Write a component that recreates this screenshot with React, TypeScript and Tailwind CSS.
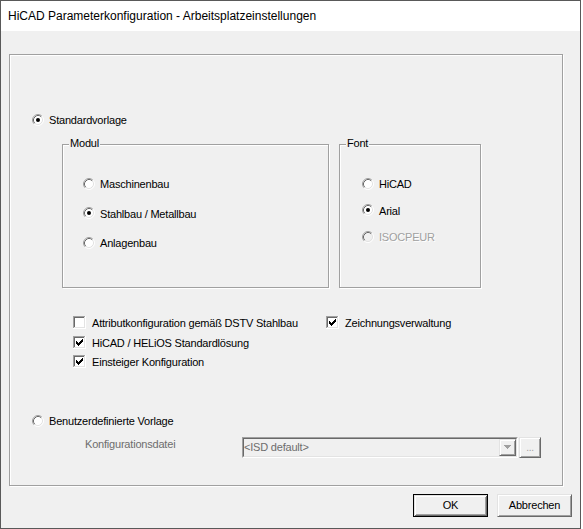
import React from "react";

// classic win32 dialog look
const ui = "font-['Liberation_Sans',Arial,sans-serif] text-[11px] leading-[13px] tracking-[-0.2px] text-black";

function Radio({ checked = false, disabled = false }: { checked?: boolean; disabled?: boolean }) {
  return (
    <svg width="12" height="12" viewBox="0 0 12 12" className="shrink-0">
      <circle cx="6" cy="6" r="5" fill={disabled ? "#f0f0f0" : "#fff"} />
      <path d="M2.11 9.89 A5.5 5.5 0 0 1 9.89 2.11" fill="none" stroke="#a0a0a0" strokeWidth="1" />
      <path d="M9.89 2.11 A5.5 5.5 0 0 1 2.11 9.89" fill="none" stroke="#ffffff" strokeWidth="1" />
      <path d="M2.82 9.18 A4.5 4.5 0 0 1 9.18 2.82" fill="none" stroke="#696969" strokeWidth="1" />
      <path d="M9.18 2.82 A4.5 4.5 0 0 1 2.82 9.18" fill="none" stroke="#e3e3e3" strokeWidth="1" />
      {checked && <circle cx="6" cy="6" r="2" fill={disabled ? "#a0a0a0" : "#000"} />}
    </svg>
  );
}

function Check({ checked = false }: { checked?: boolean }) {
  return (
    <svg width="13" height="13" viewBox="0 0 13 13" shapeRendering="crispEdges" className="shrink-0">
      <rect x="0" y="0" width="13" height="13" fill="#fff" />
      <rect x="0" y="0" width="12" height="1" fill="#a0a0a0" />
      <rect x="0" y="0" width="1" height="12" fill="#a0a0a0" />
      <rect x="1" y="1" width="10" height="1" fill="#696969" />
      <rect x="1" y="1" width="1" height="10" fill="#696969" />
      <rect x="1" y="11" width="11" height="1" fill="#e3e3e3" />
      <rect x="11" y="1" width="1" height="11" fill="#e3e3e3" />
      {checked && (
        <g fill="#000">
          <rect x="9" y="3" width="1" height="1" />
          <rect x="8" y="4" width="2" height="1" />
          <rect x="3" y="5" width="1" height="1" />
          <rect x="7" y="5" width="3" height="1" />
          <rect x="3" y="6" width="2" height="1" />
          <rect x="6" y="6" width="3" height="1" />
          <rect x="3" y="7" width="5" height="1" />
          <rect x="4" y="8" width="3" height="1" />
          <rect x="5" y="9" width="1" height="1" />
        </g>
      )}
    </svg>
  );
}

function RadioRow({ label, checked, disabled }: { label: string; checked?: boolean; disabled?: boolean }) {
  return (
    <div className="flex items-center gap-[5px] h-[13px]">
      <Radio checked={checked} disabled={disabled} />
      <span className={`mt-[2px] ${disabled ? "text-[#a0a0a0] [text-shadow:1px_1px_0_#fff]" : ""}`}>{label}</span>
    </div>
  );
}

function CheckRow({ label, checked }: { label: string; checked?: boolean }) {
  return (
    <div className="flex items-center gap-[6px] h-[13px]">
      <Check checked={checked} />
      <span className="mt-[2px]">{label}</span>
    </div>
  );
}

function Group({ title, className, children }: { title: string; className: string; children: React.ReactNode }) {
  return (
    <div
      className={`relative border border-[#a0a0a0] shadow-[inset_1px_1px_0_#fff,1px_1px_0_#fff] ${className}`}
    >
      <span className="absolute -top-[8px] bg-[#f0f0f0] px-[1px] h-[13px] left-[6px]">{title}</span>
      {children}
    </div>
  );
}

const raised =
  "border border-t-[#e3e3e3] border-l-[#e3e3e3] border-b-[#696969] border-r-[#696969] shadow-[inset_1px_1px_0_#fff,inset_-1px_-1px_0_#a0a0a0]";

export default function App() {
  return (
    <div className={`w-[583px] h-[529px] bg-white flex ${ui}`}>
      <div className="w-[581px] h-full border border-[#595959] flex flex-col bg-[#f0f0f0]">
        {/* title bar */}
        <div className="h-[30px] bg-white flex items-center pl-[7px] pt-[1px] text-[12px] tracking-normal">
          HiCAD Parameterkonfiguration - Arbeitsplatzeinstellungen
        </div>

        <div className="flex-1 flex flex-col pt-[23px] pl-[8px]">
          {/* main frame */}
          <div className="w-[554px] h-[432px] border border-[#a0a0a0] shadow-[inset_1px_1px_0_#fff,1px_1px_0_#fff] flex flex-col">
            <div className="mt-[58px] pl-[22px]">
              <RadioRow label="Standardvorlage" checked />
            </div>

            <div className="mt-[18px] ml-[52px] flex gap-[10px]">
              <Group title="Modul" className="w-[267px] h-[144px]">
                <div className="mt-[32px] pl-[20px] flex flex-col gap-[16.5px]">
                  <RadioRow label="Maschinenbau" />
                  <RadioRow label="Stahlbau / Metallbau" checked />
                  <RadioRow label="Anlagenbau" />
                </div>
              </Group>
              <Group title="Font" className="w-[142px] h-[144px]">
                <div className="mt-[32px] pl-[22px] flex flex-col gap-[13.5px]">
                  <RadioRow label="HiCAD" />
                  <RadioRow label="Arial" checked />
                  <RadioRow label="ISOCPEUR" disabled />
                </div>
              </Group>
            </div>

            <div className="mt-[28px] ml-[63px] grid grid-cols-[253px_auto] gap-y-[6.5px]">
              <CheckRow label="Attributkonfiguration gemäß DSTV Stahlbau" />
              <CheckRow label="Zeichnungsverwaltung" checked />
              <CheckRow label="HiCAD / HELiOS Standardlösung" checked />
              <div />
              <CheckRow label="Einsteiger Konfiguration" checked />
            </div>

            <div className="mt-[46px] pl-[22px]">
              <RadioRow label="Benutzerdefinierte Vorlage" />
            </div>

            <div className="mt-[9.5px] ml-[75px] flex items-start">
              <span className="w-[157px] mt-[1px] text-[#6d6d6d]">Konfigurationsdatei</span>
              <div className="w-[276px] h-[21px] border border-t-[#a0a0a0] border-l-[#a0a0a0] border-b-white border-r-white">
                <div className="h-full border border-t-[#696969] border-l-[#696969] border-b-[#e3e3e3] border-r-[#e3e3e3] bg-[#f0f0f0] flex items-center">
                  <span className="flex-1 text-[#6d6d6d]">&lt;ISD default&gt;</span>
                  <div className={`w-[17px] h-[17px] ${raised} bg-[#f0f0f0] flex items-center justify-center`}>
                    <svg width="7" height="4" viewBox="0 0 7 4" shapeRendering="crispEdges">
                      <path d="M0 0h7v1H0zM1 1h5v1H1zM2 2h3v1H2zM3 3h1v1H3z" fill="#a0a0a0" />
                    </svg>
                  </div>
                </div>
              </div>
              <div className={`ml-[1px] w-[22px] h-[21px] ${raised} bg-[#f0f0f0] flex items-center justify-center text-[#a0a0a0] text-[10px]`}>
                ...
              </div>
            </div>
          </div>

          {/* buttons */}
          <div className="mt-[8px] flex justify-end gap-[9px] pr-[8px]">
            <button className="w-[75px] h-[23px] border border-black bg-[#f0f0f0] shadow-[inset_1px_1px_0_#e3e3e3,inset_-1px_-1px_0_#696969,inset_2px_2px_0_#fff,inset_-2px_-2px_0_#a0a0a0] flex items-center justify-center">
              OK
            </button>
            <button className={`w-[75px] h-[23px] ${raised} bg-[#f0f0f0] flex items-center justify-center`}>
              Abbrechen
            </button>
          </div>
        </div>
      </div>
    </div>
  );
}
